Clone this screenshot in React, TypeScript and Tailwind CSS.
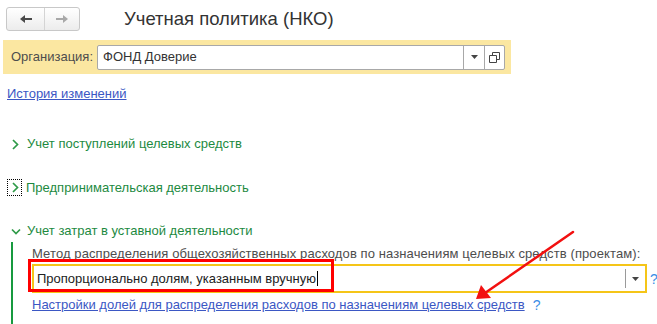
import React from "react";

const F = { fontFamily: '"Liberation Sans", Arial, sans-serif' };

function Chevron({ down = false }: { down?: boolean }) {
  return (
    <svg width="10" height="11" viewBox="0 0 10 11" className="shrink-0">
      {down ? (
        <path d="M1 3.5 L5 7.5 L9 3.5" fill="none" stroke="#2e9a48" strokeWidth="1.7" />
      ) : (
        <path d="M3 1 L7.5 5.5 L3 10" fill="none" stroke="#2e9a48" strokeWidth="1.7" />
      )}
    </svg>
  );
}

export default function App() {
  return (
    <div className="relative w-[657px] h-[324px] bg-white overflow-hidden text-[13px]" style={F}>
      {/* header */}
      <div className="flex items-center h-[37px] pt-[1px]">
        <div className="ml-[6px] flex h-[24px] w-[74px] rounded-[3px] border border-[#c8c8c8] bg-gradient-to-b from-white to-[#ececec]">
          <div className="flex w-[38px] items-center justify-center border-r border-[#d4d4d4]">
            <svg width="14" height="10" viewBox="0 0 14 10">
              <path d="M1 5 L6 1 V4 H13 V6 H6 V9 Z" fill="#4a4a4a" />
            </svg>
          </div>
          <div className="flex flex-1 items-center justify-center">
            <svg width="14" height="10" viewBox="0 0 14 10">
              <path d="M13 5 L8 1 V4 H1 V6 H8 V9 Z" fill="#a8a8a8" />
            </svg>
          </div>
        </div>
        <div className="ml-[44px] text-[18.5px] text-[#333] leading-none">Учетная политика (НКО)</div>
      </div>

      {/* org bar */}
      <div className="ml-[3px] mt-[3px] flex h-[34px] w-[508px] items-center bg-[#fbe7a1] pl-[8px]">
        <span className="text-[#4d4d4d]">Организация:</span>
        <div className="ml-[4px] flex h-[25px] w-[408px] items-stretch rounded-[2px] border border-[#a8a8a8] bg-white">
          <div className="flex flex-1 items-center pl-[5px] text-[#333]">ФОНД Доверие</div>
          <div className="flex w-[21px] items-center justify-center border-l border-[#a8a8a8]">
            <svg width="7" height="4" viewBox="0 0 7 4"><path d="M0 0 H7 L3.5 4 Z" fill="#444" /></svg>
          </div>
          <div className="flex w-[20px] items-center justify-center border-l border-[#a8a8a8]">
            <svg width="11" height="11" viewBox="0 0 11 11">
              <path d="M3.5 3.5 V0.5 H10.5 V7.5 H7.5" fill="none" stroke="#444" strokeWidth="1" />
              <path d="M0.5 3.5 H7.5 V10.5 H0.5 Z" fill="none" stroke="#444" strokeWidth="1" />
            </svg>
          </div>
        </div>
      </div>

      <div className="mt-[12px] ml-[7px] text-[#3b57c4] underline leading-[16px]">История изменений</div>

      <div className="mt-[34px] ml-[10px] flex items-center gap-[7px] leading-[16px] text-[#1d8a3f]">
        <Chevron />
        <span>Учет поступлений целевых средств</span>
      </div>

      <div className="mt-[27px] ml-[7px] flex items-center gap-[4px] leading-[16px] text-[#1d8a3f]">
        <div className="flex h-[17px] w-[15px] items-center justify-center border border-dotted border-black">
          <Chevron />
        </div>
        <span>Предпринимательская деятельность</span>
      </div>

      <div className="mt-[27px] ml-[11px] flex items-center gap-[6px] leading-[16px] text-[#1d8a3f]">
        <Chevron down />
        <span>Учет затрат в уставной деятельности</span>
      </div>

      <div className="ml-[11px] mt-[3px] flex border-l-2 border-[#179a3f] h-[90px]">
        <div className="ml-[19px] flex flex-col">
          <div className="mt-[4px] text-[#4d4d4d] leading-[16px] tracking-[0.1px]">
            Метод распределения общехозяйственных расходов по назначениям целевых средств (проектам):
          </div>
          <div className="mt-[2px] flex items-center">
            <div className="flex h-[29px] w-[615px] items-stretch border-2 border-[#f5c518] bg-white">
              <div className="flex flex-1 items-center pl-[3px] text-[#222]">
                Пропорционально долям, указанным вручную<span className="ml-[1px] inline-block h-[15px] w-[1px] bg-black" />
              </div>
              <div className="my-[3px] flex w-[20px] items-center justify-center border-l border-[#9a9a9a]">
                <svg width="7" height="4" viewBox="0 0 7 4"><path d="M0 0 H7 L3.5 4 Z" fill="#444" /></svg>
              </div>
            </div>
            <span className="ml-[3px] text-[14px] text-[#3a8ee6] leading-none">?</span>
          </div>
          <div className="mt-[4px] flex items-center">
            <span className="text-[#3b57c4] underline leading-[16px]">
              Настройки долей для распределения расходов по назначениям целевых средств
            </span>
            <span className="ml-[8px] text-[14px] text-[#3a8ee6] leading-[16px]">?</span>
          </div>
        </div>
      </div>

      {/* red highlight box */}
      <div className="absolute left-[28px] top-[259px] h-[33px] w-[306px] border-[3px] border-[#ff0000]" />

      {/* red arrow */}
      <svg className="absolute left-0 top-0" width="657" height="324" viewBox="0 0 657 324">
        <line x1="573" y1="232" x2="485" y2="293" stroke="#f21010" strokeWidth="2.5" strokeLinecap="round" />
        <path d="M476 299 L481 285 L491 298 Z" fill="#f21010" />
      </svg>
    </div>
  );
}
